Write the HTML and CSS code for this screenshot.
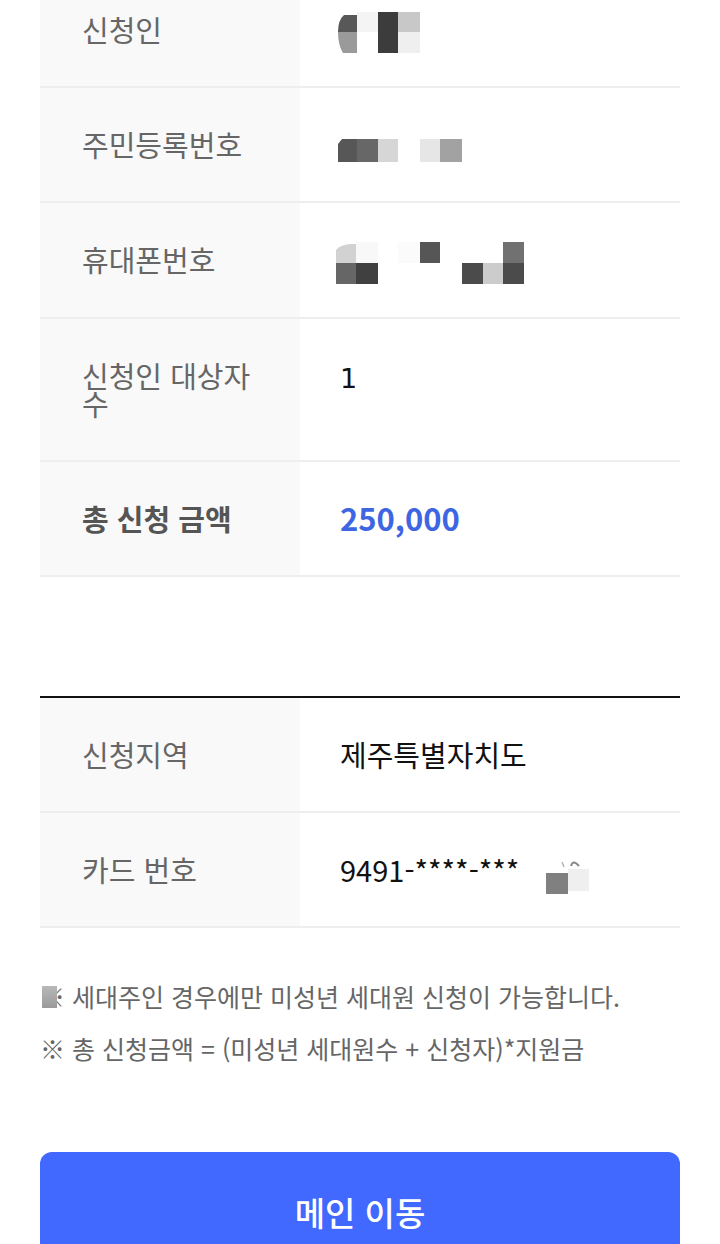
FILE: index.html
```html
<!DOCTYPE html>
<html lang="ko">

<head>
    <meta charset="UTF-8" />
    <meta name="viewport" content="width=device-width, initial-scale=1.0" />
    <title>신청 완료</title>
    <link rel="stylesheet" href="styles.css">
</head>

<body>
    <div class="page">
        <table class="info">
            <tbody>
                <tr>
                    <th>신청인</th>
                    <td>
                        <svg class="blur blur-tall" width="90" height="41" viewBox="0 0 90 41">
                            <path d="M8 3 L21 3 L21 20 L2 20 Q2 8 8 3 Z" fill="#585858" />
                            <path d="M2 20 L21 20 L21 41 L7 41 Q2 33 2 20 Z" fill="#9a9a9a" />
                            <rect x="21" y="0" width="21" height="20" fill="#f4f4f4" />
                            <rect x="42" y="0" width="20" height="41" fill="#3c3c3c" />
                            <rect x="62" y="0" width="22" height="20" fill="#c8c8c8" />
                            <rect x="62" y="20" width="22" height="21" fill="#efefef" />
                        </svg>
                    </td>
                </tr>
                <tr>
                    <th>주민등록번호</th>
                    <td>
                        <svg class="blur blur-short" width="130" height="23" viewBox="0 0 130 23">
                            <path d="M6 0 L21 0 L21 23 L2 23 L2 5 Z" fill="#575757" />
                            <rect x="21" y="0" width="21" height="23" fill="#676767" />
                            <rect x="42" y="0" width="20" height="23" fill="#d6d6d6" />
                            <rect x="84" y="0" width="20" height="23" fill="#e6e6e6" />
                            <rect x="104" y="0" width="22" height="23" fill="#a2a2a2" />
                        </svg>
                    </td>
                </tr>
                <tr>
                    <th>휴대폰번호</th>
                    <td>
                        <svg class="blur blur-tall" width="190" height="42" viewBox="0 0 190 42">
                            <path d="M0 21 L0 8 Q4 3 14 2 L20 2 L20 21 Z" fill="#d2d2d2" />
                            <rect x="0" y="21" width="20" height="21" fill="#666666" />
                            <rect x="20" y="0" width="22" height="21" fill="#f8f8f8" />
                            <rect x="20" y="21" width="22" height="21" fill="#404040" />
                            <rect x="62" y="0" width="22" height="21" fill="#fbfbfb" />
                            <rect x="84" y="0" width="20" height="21" fill="#565656" />
                            <rect x="126" y="21" width="21" height="21" fill="#4b4b4b" />
                            <rect x="147" y="21" width="20" height="21" fill="#cccccc" />
                            <rect x="167" y="0" width="21" height="21" fill="#717171" />
                            <rect x="167" y="21" width="21" height="21" fill="#4b4b4b" />
                        </svg>
                    </td>
                </tr>
                <tr>
                    <th>신청인 대상자 수</th>
                    <td><span class="num">1</span></td>
                </tr>
                <tr>
                    <th class="strong">총 신청 금액</th>
                    <td class="amount">250,000</td>
                </tr>
            </tbody>
        </table>

        <table class="info info-card">
            <tbody>
                <tr>
                    <th>신청지역</th>
                    <td>제주특별자치도</td>
                </tr>
                <tr>
                    <th>카드 번호</th>
                    <td>9491-****-***<svg class="blur blur-card" width="70" height="42" viewBox="0 0 70 42">
                            <path d="M41 7 L43 12" stroke="#b5b5b5" stroke-width="1.5" fill="none" />
                            <path d="M58 11 Q52 4 50 11" stroke="#8a8a8a" stroke-width="2" fill="none" />
                            <rect x="25" y="18" width="22" height="21" fill="#808080" />
                            <rect x="47" y="14" width="21" height="22" fill="#efefef" />
                        </svg></td>
                </tr>
            </tbody>
        </table>

        <div class="notes">
            <p><span class="mark">※<span class="smudge"></span></span> 세대주인 경우에만 미성년 세대원 신청이 가능합니다.</p>
            <p>※ 총 신청금액 = (미성년 세대원수 + 신청자)*지원금</p>
        </div>

        <button type="button" class="btn-main">메인 이동</button>
    </div>
</body>

</html>
```

FILE: styles.css
```css
body {
    margin: 0;
    background-color: white;
    font-family: "Noto Sans CJK KR", "Noto Sans", sans-serif;
    color: #111;
}

.page {
    margin-top: -27px;
    padding: 0 40px;
}

.info {
    width: 640px;
    border-collapse: collapse;
    table-layout: fixed;
}

.info tr {
    border-bottom: 2px solid #eeeeee;
}

.info th {
    width: 178px;
    padding: 42px 40px 43px 42px;
    background-color: #f9f9f9;
    color: #666;
    font-size: 29px;
    font-weight: 400;
    line-height: 28px;
    text-align: left;
    vertical-align: top;
}

.info td {
    padding: 42px 40px 43px;
    font-size: 29px;
    line-height: 28px;
    vertical-align: top;
    color: #111;
}

.info th.strong {
    color: #555;
    font-weight: 700;
}

.info td.amount {
    color: #3f66e2;
    font-weight: 700;
    font-size: 31px;
}

.num {
    font-family: "DejaVu Sans", sans-serif;
    font-size: 27px;
}

.info-card {
    margin-top: 119px;
    border-top: 2px solid #111;
}

.blur {
    display: block;
    margin-left: -4px;
}

.blur-tall {
    margin-top: -3px;
    margin-bottom: -10px;
}

.blur-short {
    margin-top: 9px;
    margin-bottom: -4px;
}

.blur-card {
    display: inline-block;
    vertical-align: top;
    margin: 0 0 -14px 2px;
}

.notes {
    margin-top: 53px;
}

.notes p {
    margin: 0 0 22px;
    font-size: 25px;
    line-height: 30px;
    color: #666;
}

.notes p:last-child {
    margin-bottom: 0;
}

.mark {
    position: relative;
}

.smudge {
    position: absolute;
    left: 2px;
    top: 8px;
    width: 15px;
    height: 22px;
    background: linear-gradient(#b8b8b8, #9a9a9a);
}

.btn-main {
    display: block;
    width: 640px;
    height: 120px;
    margin-top: 89px;
    border: none;
    border-radius: 12px;
    background-color: #4169ff;
    color: white;
    font-family: "Noto Sans CJK KR", "Noto Sans", sans-serif;
    font-size: 33px;
    font-weight: 500;
}
```
